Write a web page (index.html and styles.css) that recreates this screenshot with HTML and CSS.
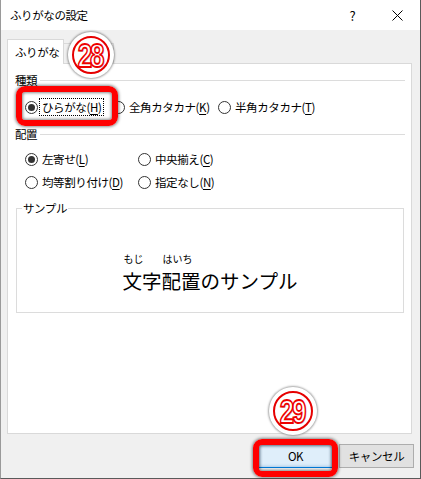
FILE: index.html
```html
<!DOCTYPE html>
<html lang="ja">
<head>
<meta charset="utf-8">
<title>ふりがなの設定</title>
<link rel="stylesheet" href="styles.css">
</head>
<body>
<div class="window">
  <header class="titlebar">
    <span class="title">ふりがなの設定</span>
    <span class="tb-btn help">?</span>
    <span class="tb-btn close"><svg width="11" height="11" viewBox="0 0 11 11"><path d="M0.5 0.5 L10.5 10.5 M10.5 0.5 L0.5 10.5" stroke="#000" stroke-width="1" fill="none"/></svg></span>
  </header>
  <div class="client">
    <div class="tabs">
      <div class="tab active">ふりがな</div>
      <div class="tab inactive"></div>
    </div>
    <div class="panel">
      <div class="group-head"><span>種類</span><i class="rule"></i></div>
      <div class="options kind">
        <label class="radio checked"><span class="mark"></span><span class="text focus">ひらがな(<u>H</u>)</span></label>
        <label class="radio"><span class="mark"></span><span class="text">全角カタカナ(<u>K</u>)</span></label>
        <label class="radio"><span class="mark"></span><span class="text">半角カタカナ(<u>T</u>)</span></label>
      </div>
      <div class="group-head second"><span>配置</span><i class="rule"></i></div>
      <div class="options align">
        <label class="radio checked"><span class="mark"></span><span class="text">左寄せ(<u>L</u>)</span></label>
        <label class="radio"><span class="mark"></span><span class="text">中央揃え(<u>C</u>)</span></label>
        <label class="radio"><span class="mark"></span><span class="text">均等割り付け(<u>D</u>)</span></label>
        <label class="radio"><span class="mark"></span><span class="text">指定なし(<u>N</u>)</span></label>
      </div>
      <fieldset class="sample">
        <legend>サンプル</legend>
        <div class="sample-text">
          <span class="rgroup"><span class="rt">もじ</span><span class="rb">文字</span></span>
          <span class="rgroup"><span class="rt">はいち</span><span class="rb">配置</span></span>
          <span class="rgroup"><span class="rt"></span><span class="rb">のサンプル</span></span>
        </div>
      </fieldset>
    </div>
    <div class="buttons">
      <button class="btn default">OK</button>
      <button class="btn">キャンセル</button>
    </div>
  </div>
  <div class="highlight h-kind"></div>
  <div class="highlight h-ok"></div>
  <div class="callout c28"><span class="num">28</span></div>
  <div class="callout c29"><span class="num">29</span></div>
</div>
</body>
</html>
```
FILE: styles.css
```css
html, body {
  margin: 0;
  padding: 0;
}
body {
  width: 421px;
  height: 479px;
  font-family: "Noto Sans CJK JP", "Noto Sans", sans-serif;
  font-size: 11.5px;
  letter-spacing: -0.4px;
  color: #000;
  overflow: hidden;
}
.window {
  position: relative;
  width: 421px;
  height: 479px;
  box-sizing: border-box;
  border: 1px solid #5a5a5a;
  border-top: 0;
  border-left-color: #9a9a9a;
  background: #f0f0f0;
  display: flex;
  flex-direction: column;
}
.titlebar {
  flex: none;
  height: 30px;
  background: #fff;
  display: flex;
  align-items: center;
}
.title {
  flex: 1;
  padding-left: 9px;
  line-height: 16px;
}
.tb-btn {
  width: 45px;
  height: 30px;
  display: flex;
  align-items: center;
  justify-content: center;
  font-size: 13px;
}
.client {
  flex: 1;
  display: flex;
  flex-direction: column;
  padding: 9px 6px 0 6px;
}
.tabs {
  position: relative;
  z-index: 1;
  display: flex;
  align-items: flex-end;
  height: 25px;
  margin-bottom: -1px;
}
.tab {
  box-sizing: border-box;
  border: 1px solid #d9d9d9;
  border-bottom: 0;
}
.tab.active {
  width: 57px;
  height: 25px;
  background: #fff;
  padding-left: 7px;
  line-height: 24px;
}
.tab.inactive {
  width: 50px;
  height: 20px;
  margin-bottom: 1px;
  border-left: 0;
  background: #f0f0f0;
}
.panel {
  box-sizing: border-box;
  height: 371px;
  margin-right: 2px;
  background: #fff;
  border: 1px solid #d9d9d9;
  padding: 8px 6px 0 7px;
}
.group-head {
  display: flex;
  align-items: center;
  height: 16px;
  line-height: 16px;
}
.group-head.second {
  margin-top: 10px;
}
.group-head .rule {
  flex: 1;
  height: 1px;
  margin-left: 3px;
  background: #dcdcdc;
}
.options {
  display: grid;
  padding-left: 10px;
  row-gap: 5px;
}
.options.kind {
  margin-top: 10px;
  grid-template-columns: 87px 106px auto;
}
.options.align {
  margin-top: 8px;
  grid-template-columns: 113px auto;
}
.radio {
  display: flex;
  align-items: center;
  height: 18px;
  white-space: nowrap;
}
.mark {
  flex: none;
  width: 13px;
  height: 13px;
  box-sizing: border-box;
  border: 1px solid #333;
  border-radius: 50%;
  margin-right: 2px;
  display: flex;
  align-items: center;
  justify-content: center;
}
.radio.checked .mark::after {
  content: "";
  width: 7px;
  height: 7px;
  border-radius: 50%;
  background: #333;
}
.text {
  padding: 0 2px;
  line-height: 16px;
}
.text.focus {
  outline: 1px dotted #000;
}
.text u {
  text-decoration-thickness: 1px;
  text-underline-offset: 2px;
}
.sample {
  margin: 9px 1px 0 1px;
  padding: 0;
  min-width: 0;
  border: 1px solid #dcdcdc;
}
.sample legend {
  margin-left: 5px;
  padding: 0 1px;
  line-height: 16px;
}
.sample-text {
  display: flex;
  justify-content: center;
  align-items: flex-end;
  padding: 37px 0 18px;
  letter-spacing: 0;
}
.rgroup {
  display: inline-flex;
  flex-direction: column;
  align-items: flex-start;
}
.rt {
  font-size: 10px;
  line-height: 12px;
  height: 12px;
  margin-bottom: 3px;
  padding-left: 1px;
  white-space: nowrap;
}
.rb {
  font-size: 19.5px;
  line-height: 26px;
  white-space: nowrap;
}
.buttons {
  display: flex;
  justify-content: flex-end;
  gap: 6px;
  margin-top: 10px;
}
.btn {
  width: 75px;
  height: 24px;
  padding: 0;
  border: 1px solid #adadad;
  background: #e1e1e1;
  font-family: "Noto Sans CJK JP", sans-serif;
  font-size: 11.5px;
  letter-spacing: -0.4px;
  color: #000;
}
.btn.default {
  border-color: #0078d7;
  background: #dfeefa;
  box-shadow: inset 0 0 3px 1px #a9c9e6;
}
.highlight {
  position: absolute;
  z-index: 5;
  box-sizing: border-box;
  border: 6px solid #ff0000;
  border-radius: 9px;
  box-shadow: 0 0 3px 1px rgba(0, 0, 0, 0.45), inset 0 0 3px 1px rgba(0, 0, 0, 0.45);
}
.h-kind {
  left: 15px;
  top: 86px;
  width: 102px;
  height: 40px;
}
.h-ok {
  left: 252px;
  top: 439px;
  width: 85px;
  height: 38px;
}
.callout {
  position: absolute;
  z-index: 6;
  border-radius: 50%;
  background: #fff;
  box-shadow: 0 0 2px 1px rgba(0, 0, 0, 0.35);
  display: flex;
  align-items: center;
  justify-content: center;
}
.callout::before {
  content: "";
  position: absolute;
  inset: 4px;
  border: 2px solid #e60000;
  border-radius: 50%;
}
.c28 {
  left: 67px;
  top: 32px;
  width: 46px;
  height: 46px;
}
.c29 {
  left: 268px;
  top: 387px;
  width: 48px;
  height: 48px;
}
.num {
  position: relative;
  font-family: "Liberation Sans", Arial, sans-serif;
  font-weight: bold;
  font-size: 34px;
  line-height: 1;
  letter-spacing: -3px;
  color: #fff;
  -webkit-text-stroke: 1.8px #ee0000;
  text-shadow: 1px 1px 0 #b0b0b0;
  transform: scaleX(0.76);
  margin-left: -3px;
}
```
